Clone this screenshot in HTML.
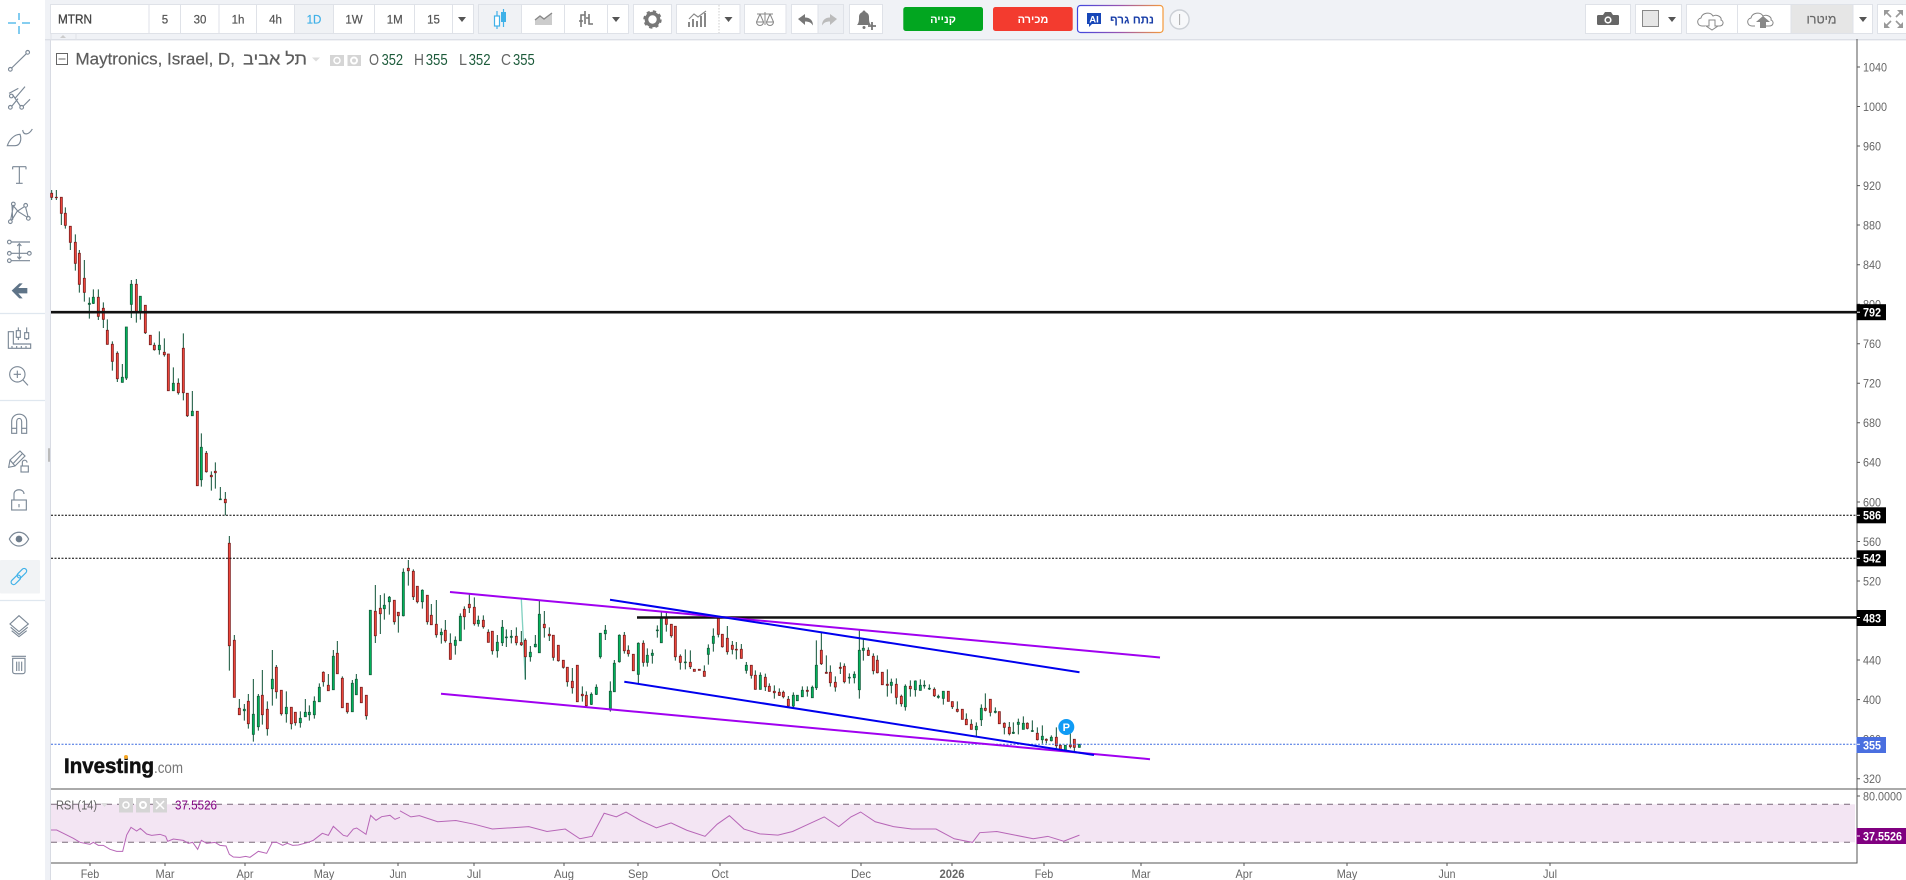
<!DOCTYPE html>
<html lang="he"><head><meta charset="utf-8"><title>MTRN Chart</title>
<style>
html,body{margin:0;padding:0;background:#fff;width:1906px;height:880px;overflow:hidden}
svg{display:block;font-family:"Liberation Sans",sans-serif}
.b{fill:#fff;stroke:#dfe2e8;stroke-width:1}
.t{font-size:11.5px;fill:#555;text-anchor:middle;stroke:#555;stroke-width:.2}
.a{font-size:12px;fill:#666}
.x{font-size:12px;fill:#666;text-anchor:middle}
.l{font-size:12px;fill:#fff;font-weight:bold}
.i{fill:none;stroke:#7b8896;stroke-width:3.4}
.w{fill:none;stroke:#0f5236;stroke-width:3}
.r{fill:#f64a3e;stroke:#7d1d1d;stroke-width:2.5}
.g{fill:#00bb5e;stroke:#0f5f3a;stroke-width:2.5}
.ti{fill:none;stroke:#777;stroke-width:1.4}
</style></head><body>
<svg width="1906" height="880" viewBox="0 0 1906 880" xmlns="http://www.w3.org/2000/svg">
<defs><linearGradient id="ai" x1="0" x2="1" y1="0" y2="0"><stop offset="0" stop-color="#3f46e0"/><stop offset=".5" stop-color="#9a55b0"/><stop offset="1" stop-color="#f59a3a"/></linearGradient></defs>
<rect width="1906" height="880" fill="#fff"/>
<rect x="45" y="0" width="6" height="880" fill="#eff1f6"/>
<rect x="50" y="39" width="1" height="841" fill="#d8dbe3"/>
<rect x="48" y="448" width="2" height="14" rx="1" fill="#bbb"/>
<rect x="45" y="0" width="1861" height="39" fill="#f0f2f6"/>
<rect x="45" y="39" width="1861" height="1.4" fill="#dcdfe6"/>

<!-- toolbar -->
<rect class="b" x="50.5" y="4.5" width="423" height="29"/>
<path d="M149 5V33M180.5 5V33M219 5V33M256.5 5V33M294.5 5V33M333.5 5V33M374.5 5V33M414.5 5V33M452.5 5V33" stroke="#dfe2e8"/>
<rect x="295" y="5" width="38" height="28" fill="#f0f2f5"/>
<path d="M51 33.5V39.5M76 33.5V39.5" stroke="#dfe2e8"/><path d="M60 38l3-3 3 3z" fill="#ccc"/>
<text x="58" y="23.5" font-size="13" fill="#444" stroke="#444" stroke-width=".3" textLength="34" lengthAdjust="spacingAndGlyphs">MTRN</text>
<text class="t" x="165" y="23.5">5</text><text class="t" x="200" y="23.5">30</text><text class="t" x="238" y="23.5">1h</text><text class="t" x="275.5" y="23.5">4h</text><text class="t" x="314" y="23.5" style="fill:#3fb1e8;stroke:#3fb1e8">1D</text><text class="t" x="354" y="23.5">1W</text><text class="t" x="394.7" y="23.5">1M</text><text class="t" x="433.5" y="23.5">15</text>
<path d="M458 17h8l-4 5z" fill="#555"/>

<rect class="b" x="478.5" y="4.5" width="150" height="29"/>
<rect x="479" y="5" width="42.5" height="28" fill="#f0f2f5"/>
<path d="M521.5 5V33M564.5 5V33M607.5 5V33" stroke="#dfe2e8"/>
<path d="M497 11V29M503.5 9V27" stroke="#3fb1e8" stroke-width="1.2"/><rect x="494.5" y="16" width="5" height="10" fill="#fff" stroke="#3fb1e8" stroke-width="1.2"/><rect x="501" y="12" width="5" height="10" fill="#3fb1e8"/>
<path d="M535 25v-5l5-4 4 3 8-6v12z" fill="#ccc"/><path d="M535 20l5-4 4 3 8-6" fill="none" stroke="#888" stroke-width="1.4"/>
<path d="M581 27V15h4M585 11V24M589 14V24h4M579 21h4M589 18h-3" fill="none" stroke="#777" stroke-width="1.6"/>
<path d="M612 17h8l-4 5z" fill="#555"/>

<rect class="b" x="633.5" y="4.5" width="38" height="29"/>
<circle cx="652.5" cy="19.5" r="6" fill="none" stroke="#777" stroke-width="3.6"/><circle cx="652.5" cy="19.5" r="8" fill="none" stroke="#777" stroke-width="2.4" stroke-dasharray="3.2 3.1"/>

<rect class="b" x="676.5" y="4.5" width="63.5" height="29"/>
<path d="M719 5V33" stroke="#ccc" stroke-dasharray="1.5 1.5"/>
<path d="M689 27v-5M693 27v-8M697 27v-6M701 27v-11M705 27v-14" stroke="#888" stroke-width="2"/><path d="M689 19l5-5 4 3 8-6" fill="none" stroke="#888" stroke-width="1.1"/>
<path d="M724.5 17h8l-4 5z" fill="#555"/>

<rect class="b" x="744.5" y="4.5" width="41.5" height="29"/>
<path d="M765 12V25M757 14h16M760 14l-3.5 8M760 14l3.5 8M770 14l-3.5 8M770 14l3.5 8" fill="none" stroke="#888"/><path d="M756.5 22h7a3.5 3.5 0 0 1-7 0zM766.5 22h7a3.5 3.5 0 0 1-7 0z" fill="none" stroke="#888"/>

<rect class="b" x="791.5" y="4.5" width="52" height="29"/>
<rect x="818" y="5" width="25" height="28" fill="#eef0f4"/>
<path d="M818 5V33" stroke="#dfe2e8"/>
<path d="M798 19l7-5v3.5c5 0 8 3 8 8-2-3-4-4-8-4V25z" fill="#777"/>
<path d="M837 19l-7-5v3.5c-5 0-8 3-8 8 2-3 4-4 8-4V25z" fill="#bbb"/>

<rect class="b" x="849.5" y="4.5" width="33" height="29"/>
<path d="M857 25c2-2 2-5 2-8 0-3 1.500-4 3.500-5 0-2 3-2 3 0 2 1 3.500 2 3.500 5 0 3 0 6 2 8z" fill="#777"/><circle cx="864" cy="27.5" r="1.5" fill="#777"/><path d="M872 22v8M868 26h8" stroke="#777" stroke-width="1.8"/>

<rect x="903.3" y="7" width="79.7" height="24" rx="2.5" fill="#02a620"/>
<text x="943" y="23" font-size="11" fill="#fff" font-weight="bold" text-anchor="middle">קנייה</text>
<rect x="993" y="7" width="79.7" height="24" rx="2.5" fill="#f33b2f"/>
<text x="1033" y="23" font-size="11" fill="#fff" font-weight="bold" text-anchor="middle">מכירה</text>
<rect x="1077.5" y="5.5" width="85.5" height="27" rx="3" fill="#fff" stroke="url(#ai)" stroke-width="1.2"/>
<path d="M1087 13h14v11h-9l-3 3v-3h-2z" fill="#1646b8"/><text x="1094" y="22.5" font-size="9.5" fill="#fff" font-weight="bold" text-anchor="middle">AI</text>
<text x="1132" y="23.5" font-size="11.5" fill="#1a3fa8" font-weight="bold" text-anchor="middle">נתח גרף</text>
<circle cx="1179.6" cy="19.5" r="9.5" fill="#f7f8fa" stroke="#ccd0d6" stroke-width="1.4"/><path d="M1179.6 14V25" stroke="#aaa"/>

<rect class="b" x="1585.5" y="4.5" width="45" height="29"/>
<path d="M1598 15h5l2-3h6l2 3h5a1.5 1.5 0 0 1 1 1v8a1.5 1.5 0 0 1-1 1h-20a1.5 1.5 0 0 1-1-1v-8a1.5 1.5 0 0 1 1-1z" fill="#666"/><circle cx="1608" cy="20" r="3.6" fill="#fff"/><circle cx="1608" cy="20" r="2" fill="#666"/>
<rect class="b" x="1635.5" y="4.5" width="46" height="29"/>
<rect x="1642.5" y="10.5" width="16" height="16" fill="#e6e6e6" stroke="#888"/>
<path d="M1668 17h8l-4 5z" fill="#555"/>
<rect class="b" x="1686.5" y="4.5" width="186" height="29"/>
<rect x="1791.5" y="5" width="61.5" height="28" fill="#e6e6e6"/>
<path d="M1737.5 5V33M1791 5V33M1853 5V33" stroke="#dfe2e8"/>
<path d="M1705 26h-3c-5 0-6-7-1-8 1-5 9-7 12-2 4-2 9 1 8 4 3 1 3 6-2 6h-3" fill="none" stroke="#888"/><path d="M1709 20h6v6h3l-6 4-6-4h3z" fill="#fff" stroke="#888"/>
<path d="M1755 26h-3c-5 0-6-7-1-8 1-5 9-7 12-2 4-2 9 1 8 4 3 1 3 6-2 6h-3" fill="none" stroke="#888"/><path d="M1760 28v-6h-4l7-6 7 6h-4v6z" fill="#888"/>
<text x="1821.5" y="23.5" font-size="12.5" fill="#666" text-anchor="middle" stroke="#666" stroke-width=".2">מיטרו</text>
<path d="M1859 17h8l-4 5z" fill="#555"/>
<rect class="b" x="1877.5" y="4.5" width="30" height="29"/>
<path d="M1884 10h6l-6 6zM1903 10h-6l6 6zM1884 28h6l-6-6zM1903 28h-6l6-6z" fill="#999"/>
<path d="M1886 12l5 5M1901 12l-5 5M1886 26l5-5M1901 26l-5-5" stroke="#999" stroke-width="1.6"/>

<!-- left sidebar icons -->
<path d="M19 13V20M19 26V34M8 23H16M22 23H30" stroke="#3fb1e8" stroke-width="1.3" fill="none"/>
<g transform="translate(0,30) scale(.33333)">
<g class="i">
<circle cx="31" cy="118" r="5.5"/><circle cx="83" cy="67" r="5.5"/><path d="M35 114L79 71"/>
<circle cx="31" cy="232" r="5.5"/><circle cx="65" cy="232" r="5.5"/><circle cx="34" cy="198" r="5.500"/>
<path d="M36 228L54 206M27 190L55 175M38 194L61 228M45 205L75 170M70 228L90 208"/>
<path d="M22 347C28 328 44 313 60 313C66 330 60 347 45 347ZM68 300C70 316 86 316 97 297"/>
<path d="M38 410H78M58 410V460M48 460H68M38 410V418M78 410V418"/>
<circle cx="40" cy="522" r="5.500"/><circle cx="77" cy="526" r="5.500"/><circle cx="31" cy="575" r="5.500"/><circle cx="85" cy="565" r="5.500"/>
<path d="M40 528L32 570M38 525L53 543L73 530M77 532L84 560M35 571L52 543L82 562M36 525L38 570"/>
<circle cx="28" cy="636" r="5.500"/><circle cx="28" cy="670" r="5.500"/><circle cx="28" cy="692" r="5.500"/><circle cx="88" cy="670" r="5.500"/>
<path d="M34 636H90M34 670H82M34 692H90M58 640V688M52 648L58 641L64 648M52 680L58 687L64 680"/>
<path d="M25 905V955H92V942H40V905ZM36 955V948M50 955V948M64 955V948M78 955V948"/>
<path d="M55 892V930M80 892V930"/><rect x="49" y="902" width="12" height="20" fill="#fff"/><rect x="74" y="908" width="12" height="18" fill="#fff"/>
<circle cx="52" cy="1033" r="23"/><path d="M41 1033H63M52 1022V1044M69 1050L84 1066"/>
</g>
<path d="M35 782L58 760H68L55 774H82V790H55L68 805H58Z" fill="#5f7488"/>
</g>
<path d="M0 313.5H45M0 400.500H45M0 600.500H45" stroke="#dfe7ef" stroke-width="1.2"/>
<rect x="0" y="560" width="40" height="33.5" rx="1" fill="#f1f3f5"/>
<g transform="translate(0,380) scale(.33333)">
<g class="i">
<path d="M35 160V125C35 95 80 95 80 125V160H65V125C65 112 50 112 50 125V160ZM35 145H50M65 145H80"/>
<path d="M26 262L30 240L60 213L75 228L45 258ZM30 240L45 258M40 250L67 221"/>
<rect x="63" y="258" width="22" height="18" fill="#fff"/><path d="M67 258V248C67 238 81 238 81 248"/>
<rect x="35" y="360" width="44" height="30"/><path d="M42 360V342C42 325 72 325 72 342"/><path d="M57 372V382"/>
<path d="M28 477C42 450 72 450 86 477C72 505 42 505 28 477Z"/>
<path d="M57 707L85 732L57 755L30 732ZM32 742L57 763L83 742M35 752L57 770L80 752"/>
<path d="M38 835H75V875C75 880 70 881 68 881H46C42 881 38 880 38 875ZM35 829H78M50 845V873M57 845V873M65 845V873"/>
</g>
<circle cx="57" cy="477" r="10" fill="#6f7d8c"/>
<g fill="none" stroke="#3fb1e8" stroke-width="3.6">
<rect x="31" y="592" width="34" height="15" rx="7.5" transform="rotate(-45 48 600)"/>
<rect x="49" y="572" width="34" height="15" rx="7.5" transform="rotate(-45 66 580)"/>
</g>
</g>

<!-- chart panes -->
<rect x="51" y="804.3" width="1804" height="38" fill="#f3e5f3"/>
<path d="M51 804.3H1855M51 842.3H1855" stroke="#7a6a7a" stroke-dasharray="6 5"/>

<!-- candles -->
<g transform="translate(40,180) scale(.33333)">
<path class="w" d="M35 30V60M49 30V60M64 52V135M76 82V146M91 139V210M106 163V272M118 210V338M133 240V365M148 352V416M160 328V372M175 328V420M190 367V444M202 418V494M217 484V572M232 514V606M247 552V608M259 441V600M274 300V414M289 297V428M301 349V419M316 376V462M343 488V512M358 454V524M373 475V530M400 562V632M415 595V644M430 460V661"/>
<path class="r" d="M32 40h6v12h-6zM46 52h6v1h-6zM61 52h6v48h-6zM73 100h6v36h-6zM88 139h6v48h-6zM103 187h6v63h-6zM115 220h6v93h-6zM130 295h6v42h-6zM172 352h6v57h-6zM187 385h6v33h-6zM199 451h6v42h-6zM214 493h6v51h-6zM229 520h6v76h-6zM286 313h6v84h-6zM313 376h6v82h-6zM328 466h6v28h-6zM340 496h6v13h-6zM370 517h6v7h-6zM382 522h6v110h-6zM412 610h6v28h-6zM427 505h6v133h-6z"/>
<path class="g" d="M145 370h6v3h-6zM157 352h6v18h-6zM244 592h6v15h-6zM256 441h6v153h-6zM271 313h6v60h-6zM298 349h6v48h-6zM355 496h6v13h-6zM397 610h6v22h-6z"/>
</g>
<g transform="translate(180,370) scale(.33333)">
<path class="w" d="M22 70V141M37 63V137M64 190V350M79 243V308M94 304V362M106 277V356M121 351V389M136 366V436"/>
<path class="r" d="M19 70h6v67h-6zM49 124h6v223h-6zM76 250h6v55h-6zM91 316h6v4h-6zM103 304h6v4h-6zM133 388h6v10h-6z"/>
<path class="g" d="M34 124h6v13h-6zM61 232h6v97h-6zM118 387h6v2h-6z"/>
</g>
<g transform="translate(200,520) scale(.33333)">
<path class="w" d="M88 48V452M103 345V532M118 537V584M133 552V602M145 522V626M160 477V665M175 522V632M187 450V614M202 544V647M217 390V557M229 435V536M244 511V587M259 514V608M274 562V628M286 577V617M301 574V623M316 537V590M328 556V602M343 529V596M358 490V545M370 454V500M385 462V512M400 390V509M412 363V462M427 469V563M442 550V581M457 480V575M469 462V524M499 526V599M526 195V369M541 225V342M553 220V299M568 228V284M583 241V314M595 277V338M610 145V289M625 120V197M640 148V240M652 199V250M667 208V266M682 226V314M694 252V314M709 240V353M724 325V371M736 300V368M751 340V419M766 349V404M781 280V362M793 259V329M808 220V279M823 232V317M835 287V320M850 286V326M865 328V367M877 334V404M892 345V413"/>
<path class="r" d="M85 70h6v307h-6zM100 361h6v171h-6zM115 565h6v19h-6zM142 544h6v67h-6zM184 526h6v58h-6zM199 568h6v58h-6zM226 442h6v73h-6zM241 511h6v70h-6zM271 562h6v49h-6zM283 577h6v31h-6zM367 457h6v28h-6zM382 496h6v16h-6zM409 400h6v61h-6zM424 475h6v88h-6zM439 550h6v25h-6zM481 502h6v46h-6zM496 526h6v61h-6zM523 274h6v73h-6zM538 265h6v16h-6zM580 241h6v64h-6zM592 277h6v10h-6zM622 145h6v7h-6zM637 154h6v76h-6zM649 199h6v46h-6zM679 226h6v79h-6zM691 286h6v28h-6zM706 313h6v31h-6zM733 331h6v31h-6zM748 370h6v48h-6zM790 268h6v22h-6zM805 253h6v10h-6zM820 262h6v49h-6zM847 301h6v19h-6zM862 337h6v30h-6zM874 334h6v58h-6z"/>
<path class="g" d="M130 568h6v4h-6zM157 583h6v60h-6zM172 529h6v91h-6zM214 478h6v28h-6zM256 562h6v19h-6zM298 595h6v13h-6zM313 577h6v13h-6zM325 577h6v7h-6zM340 544h6v40h-6zM355 502h6v43h-6zM397 409h6v100h-6zM454 490h6v85h-6zM466 478h6v46h-6zM508 271h6v193h-6zM550 256h6v10h-6zM565 232h6v13h-6zM607 157h6v130h-6zM664 211h6v34h-6zM721 337h6v7h-6zM763 361h6v15h-6zM778 289h6v73h-6zM832 301h6v10h-6zM889 367h6v25h-6z"/>
</g>
<g transform="translate(480,560) scale(.33333)">
<path d="M124 118L136 360" stroke="#3fb8a0" stroke-width="4" opacity=".65" fill="none"/>
<path class="w" d="M67 180V258M79 208V261M94 210V250M109 202V256M124 213V258M136 235V358M151 258V305M166 225V262M178 120V278M193 153V233M208 202V243M220 226V302M235 256V305M250 301V326M262 322V380M277 324V401M307 379V425M319 394V440M334 397V435M349 373V405M361 220V296M376 195V240M391 364V455M403 300V395M418 223V308M433 216V281M445 256V290M475 247V372M490 241V320M502 265V320M517 268V311M532 196V233M544 154V248M559 154V215M574 193V233M586 199V302M601 283V329M616 268V328M631 271V327M673 316V350M685 253V314M700 205V275M715 172V232M727 223V263M742 198V284M757 243V283M769 246V298M784 252V296M799 306V341M814 316V356M826 331V389M841 337V389M856 341V393M868 370V395M883 376V416M898 385V408"/>
<path class="r" d="M106 229h6v19h-6zM121 248h6v6h-6zM133 241h6v49h-6zM190 193h6v10h-6zM205 223h6v4h-6zM217 226h6v66h-6zM232 256h6v46h-6zM247 301h6v21h-6zM259 322h6v43h-6zM274 364h6v19h-6zM289 316h6v109h-6zM304 403h6v4h-6zM316 406h6v31h-6zM430 226h6v46h-6zM442 271h6v10h-6zM457 283h6v49h-6zM487 250h6v57h-6zM556 175h6v18h-6zM571 193h6v34h-6zM583 199h6v91h-6zM598 289h6v18h-6zM628 307h6v13h-6zM640 328h6v6h-6zM655 328h6v3h-6zM670 334h6v15h-6zM712 172h6v51h-6zM724 223h6v37h-6zM739 235h6v40h-6zM754 256h6v12h-6zM766 268h6v2h-6zM781 268h6v27h-6zM811 316h6v30h-6zM823 346h6v42h-6zM853 352h6v28h-6zM865 379h6v15h-6zM880 394h6v4h-6zM895 397h6v9h-6z"/>
<path class="g" d="M64 202h6v46h-6zM76 231h6v2h-6zM91 229h6v3h-6zM148 277h6v13h-6zM163 253h6v7h-6zM175 163h6v115h-6zM331 403h6v30h-6zM346 382h6v21h-6zM358 220h6v70h-6zM373 211h6v10h-6zM388 394h6v56h-6zM400 310h6v85h-6zM415 226h6v79h-6zM472 250h6v93h-6zM499 286h6v21h-6zM514 280h6v6h-6zM529 210h6v2h-6zM541 175h6v73h-6zM613 306h6v2h-6zM682 265h6v18h-6zM697 229h6v21h-6zM796 316h6v15h-6zM838 346h6v42h-6z"/>
</g>
<g transform="translate(780,600) scale(.33333)">
<path class="w" d="M10 272V295M25 288V322M40 277V325M67 259V291M82 259V290M97 257V294M109 121V270M124 95V195M139 166V221M151 196V260M166 229V275M181 187V222M193 190V250M208 220V251M223 214V250M238 88V296M250 115V182M265 142V168M280 160V223M292 166V220M322 208V290M334 236V280M349 235V313M364 284V320M376 253V332M391 241V290M406 241V290M421 238V272M433 241V266M448 253V270M463 262V291M475 284V296M490 274V314M517 304V327M532 304V337M559 340V375M574 358V389M589 367V408M604 313V378M616 280V334M631 298V349M646 322V340M673 367V403M688 366V406M700 367V402M715 356V403M730 349V388M742 367V388M757 361V396M772 382V421M787 376V431M799 415V430M814 406V424M829 382V445M841 433V455M871 390V445M883 418V453M898 433V443"/>
<path class="r" d="M7 277h6v13h-6zM22 298h6v20h-6zM79 271h6v3h-6zM121 151h6v40h-6zM136 217h6v3h-6zM148 217h6v31h-6zM163 247h6v14h-6zM178 202h6v3h-6zM190 199h6v46h-6zM262 151h6v15h-6zM277 169h6v43h-6zM289 181h6v37h-6zM304 217h6v37h-6zM319 253h6v3h-6zM346 253h6v39h-6zM361 289h6v22h-6zM388 259h6v7h-6zM460 268h6v19h-6zM502 274h6v30h-6zM514 305h6v15h-6zM529 328h6v6h-6zM544 328h6v30h-6zM556 358h6v16h-6zM571 373h6v15h-6zM613 325h6v6h-6zM628 298h6v39h-6zM655 335h6v36h-6zM670 370h6v12h-6zM685 382h6v19h-6zM739 370h6v15h-6zM769 400h6v19h-6zM796 418h6v3h-6zM826 412h6v25h-6zM838 436h6v16h-6zM868 435h6v5h-6zM880 418h6v24h-6z"/>
<path class="g" d="M37 286h6v32h-6zM49 286h6v16h-6zM64 271h6v19h-6zM94 262h6v31h-6zM106 196h6v67h-6zM205 232h6v2h-6zM220 223h6v10h-6zM235 151h6v118h-6zM247 145h6v6h-6zM331 247h6v9h-6zM373 259h6v61h-6zM403 243h6v26h-6zM418 256h6v15h-6zM430 256h6v2h-6zM445 265h6v2h-6zM472 289h6v3h-6zM487 274h6v21h-6zM586 379h6v10h-6zM601 325h6v34h-6zM643 334h6v3h-6zM697 397h6v3h-6zM712 367h6v6h-6zM727 370h6v18h-6zM754 392h6v2h-6zM784 409h6v10h-6zM811 412h6v10h-6zM853 436h6v16h-6zM895 433h6v9h-6z"/>
</g>

<!-- drawings -->
<path d="M51 312.2H1857" stroke="#111" stroke-width="2.6"/>
<path d="M51 515.3H1857M51 558.3H1857" stroke="#000" stroke-dasharray="2 1.5"/>
<path d="M637 617.5H1857" stroke="#111" stroke-width="2.6"/>
<path d="M51 744.3H1857" stroke="#3b6ae0" stroke-dasharray="2 1.5"/>
<path d="M450 592L1160 657.5M441 693.7L1150 759.2" stroke="#a000f0" stroke-width="2" fill="none"/>
<path d="M610 599.7L1079.5 672.2M624.3 681.7L1094 755" stroke="#0000ee" stroke-width="2" fill="none"/>
<circle cx="1066.3" cy="727" r="8" fill="#0f9bf5"/><text x="1066.3" y="731" font-size="11" font-weight="bold" fill="#fff" text-anchor="middle">P</text>

<!-- legend -->
<rect x="56.5" y="53.5" width="11" height="11" fill="#fff" stroke="#666"/><path d="M58.5 59H65.5" stroke="#666"/>
<text x="75.5" y="64.5" font-size="16.500" fill="#5c5c5c" stroke="#5c5c5c" stroke-width=".2" textLength="159.5" lengthAdjust="spacingAndGlyphs">Maytronics, Israel, D,</text>
<text x="243" y="64.5" font-size="16.500" fill="#5c5c5c" stroke="#5c5c5c" stroke-width=".2" textLength="64" lengthAdjust="spacingAndGlyphs">תל אביב</text>
<path d="M312 57.5h8l-4 4z" fill="#ddd"/>
<rect x="330" y="55" width="14" height="11" fill="#d5d5d5"/><rect x="347.5" y="55" width="13.5" height="11" fill="#d5d5d5"/>
<circle cx="337" cy="60.5" r="3" fill="none" stroke="#fff" stroke-width="1.5"/><circle cx="354" cy="60.5" r="3" fill="none" stroke="#fff" stroke-width="2"/>
<g font-size="15.5">
<text x="369" y="65" fill="#666" textLength="10" lengthAdjust="spacingAndGlyphs">O</text><text x="381.6" y="65" fill="#1c5a3a" textLength="21.5" lengthAdjust="spacingAndGlyphs">352</text>
<text x="414" y="65" fill="#666" textLength="10" lengthAdjust="spacingAndGlyphs">H</text><text x="425.7" y="65" fill="#1c5a3a" textLength="22" lengthAdjust="spacingAndGlyphs">355</text>
<text x="459" y="65" fill="#666" textLength="8" lengthAdjust="spacingAndGlyphs">L</text><text x="468.6" y="65" fill="#1c5a3a" textLength="22" lengthAdjust="spacingAndGlyphs">352</text>
<text x="501" y="65" fill="#666" textLength="10" lengthAdjust="spacingAndGlyphs">C</text><text x="513" y="65" fill="#1c5a3a" textLength="21.7" lengthAdjust="spacingAndGlyphs">355</text>
</g>

<!-- logo -->
<text x="64" y="773" font-size="21" font-weight="bold" fill="#111" stroke="#111" stroke-width=".55" textLength="90" lengthAdjust="spacingAndGlyphs">Investing</text>
<text x="154" y="773" font-size="16" fill="#777" textLength="29" lengthAdjust="spacingAndGlyphs">.com</text>
<circle cx="126" cy="757" r="2" fill="#f6a623"/>

<!-- rsi -->
<g transform="translate(0,720) scale(.33333)">
<polyline fill="none" stroke="#b766b7" stroke-width="3" points="153,330 170,330 190,340 220,355 240,367 270,373 280,367 295,376 310,376 330,388 350,394 368,394 380,345 393,322 410,333 421,325 440,342 455,346 480,343 497,349 503,364 520,357 550,361 565,370 578,367 593,388 604,361 620,370 645,367 660,376 678,378 688,403 700,411 720,412 737,409 750,412 775,394 800,400 817,367 830,367 848,376 862,370 878,376 895,375 925,367 940,361 967,340 985,346 1000,319 1030,346 1042,349 1060,327 1070,324 1098,343 1112,286 1128,301 1145,290 1170,286 1185,298 1200,292"/>
</g>
<g transform="scale(1.2156)">
<polyline fill="none" stroke="#b766b7" stroke-width=".82" points="329,667 338,672 345,671 360,676 375,675 390,678 405,682 420,681 435,680 450,684 465,682 477,690 487,688 497,669 507,672 515,668 527,675 540,681 552,677 565,683 580,688 590,678 600,671 612,682 625,686 640,687 652,684 665,678 678,672 690,680 700,672 708,668 720,676 735,680 750,682 770,682 785,690 800,693 806,685 820,684 835,687 850,690 862,688 875,692 888,687"/>
</g>
<text x="56" y="809.500" font-size="13" fill="#666" textLength="41" lengthAdjust="spacingAndGlyphs">RSI (14)</text>
<path d="M101 803h7l-3.5 4z" fill="#ddd"/>
<rect x="119" y="798" width="14" height="14.5" fill="#d5d5d5"/><rect x="136" y="798" width="14" height="14.5" fill="#d5d5d5"/><rect x="153" y="798" width="14" height="14.5" fill="#d5d5d5"/>
<circle cx="126" cy="805" r="3" fill="none" stroke="#fff" stroke-width="1.5"/><circle cx="143" cy="805" r="3" fill="none" stroke="#fff" stroke-width="2"/><path d="M156 801l8 8M164 801l-8 8" stroke="#fff" stroke-width="1.5"/>
<text x="175" y="809.500" font-size="13" fill="#800080" textLength="42" lengthAdjust="spacingAndGlyphs">37.5526</text>

<!-- axes -->
<path d="M1857 39V863.5M51 789H1906M51 863H1857" stroke="#555" stroke-width="1" fill="none"/>
<path d="M1857 67h3M1857 106.500h3M1857 146h3M1857 185.600h3M1857 225h3M1857 264.700h3M1857 304.200h3M1857 343.800h3M1857 383.300h3M1857 422.800h3M1857 462.400h3M1857 502h3M1857 541.500h3M1857 581h3M1857 660h3M1857 699.600h3M1857 778.700h3M1857 796h3" stroke="#555"/>
<g class="a" transform="translate(1863 0) scale(.9 1)">
<text y="71.300">1040</text><text y="110.800">1000</text><text y="150.300">960</text><text y="189.900">920</text><text y="229.300">880</text><text y="269">840</text><text y="308.500">800</text><text y="348.100">760</text><text y="387.600">720</text><text y="427.100">680</text><text y="466.700">640</text><text y="506.300">600</text><text y="545.800">560</text><text y="585.300">520</text><text y="664.300">440</text><text y="703.900">400</text><text y="743.300">360</text><text y="783">320</text><text y="800.300">80.0000</text>
</g>
<rect x="1856.500" y="304.200" width="29.500" height="16" fill="#000"/><path d="M1857 312.200h3" stroke="#fff"/>
<rect x="1856.500" y="507.300" width="29.500" height="16" fill="#000"/><path d="M1857 515.300h3" stroke="#fff"/>
<rect x="1856.500" y="550.300" width="29.500" height="16" fill="#000"/><path d="M1857 558.300h3" stroke="#fff"/>
<rect x="1856.500" y="610" width="29.500" height="16" fill="#000"/><path d="M1857 617.500h3" stroke="#fff"/>
<rect x="1856.500" y="737" width="29.500" height="16" fill="#4a6fe0"/><path d="M1857 744.300h3" stroke="#fff"/>
<rect x="1856.500" y="828" width="49.500" height="16" fill="#800080"/><path d="M1857 836h3" stroke="#fff"/>
<g transform="translate(1863 0) scale(.9 1)">
<text class="l" y="316.500">792</text><text class="l" y="519.500">586</text><text class="l" y="562.500">542</text><text class="l" y="622.300">483</text><text class="l" y="749.300">355</text><text class="l" y="840.300">37.5526</text>
</g>

<path d="M90 863v3M165 863v3M245 863v3M324 863v3M398 863v3M474 863v3M564 863v3M638 863v3M720 863v3M861 863v3M952 863v3M1044 863v3M1141 863v3M1244 863v3M1347 863v3M1447 863v3M1550 863v3" stroke="#555"/>
<g class="x">
<text x="90" y="878" textLength="18.500" lengthAdjust="spacingAndGlyphs">Feb</text><text x="165" y="878" textLength="19" lengthAdjust="spacingAndGlyphs">Mar</text><text x="245" y="878" textLength="17" lengthAdjust="spacingAndGlyphs">Apr</text><text x="324" y="878" textLength="20.500" lengthAdjust="spacingAndGlyphs">May</text><text x="398" y="878" textLength="17" lengthAdjust="spacingAndGlyphs">Jun</text><text x="474" y="878" textLength="14" lengthAdjust="spacingAndGlyphs">Jul</text><text x="564" y="878" textLength="20" lengthAdjust="spacingAndGlyphs">Aug</text><text x="638" y="878" textLength="20" lengthAdjust="spacingAndGlyphs">Sep</text><text x="720" y="878" textLength="17" lengthAdjust="spacingAndGlyphs">Oct</text><text x="861" y="878" textLength="20" lengthAdjust="spacingAndGlyphs">Dec</text><text x="952" y="878" font-weight="bold" textLength="25" lengthAdjust="spacingAndGlyphs">2026</text><text x="1044" y="878" textLength="18.500" lengthAdjust="spacingAndGlyphs">Feb</text><text x="1141" y="878" textLength="19" lengthAdjust="spacingAndGlyphs">Mar</text><text x="1244" y="878" textLength="17" lengthAdjust="spacingAndGlyphs">Apr</text><text x="1347" y="878" textLength="20.500" lengthAdjust="spacingAndGlyphs">May</text><text x="1447" y="878" textLength="17" lengthAdjust="spacingAndGlyphs">Jun</text><text x="1550" y="878" textLength="14" lengthAdjust="spacingAndGlyphs">Jul</text>
</g>
</svg>
</body></html>
